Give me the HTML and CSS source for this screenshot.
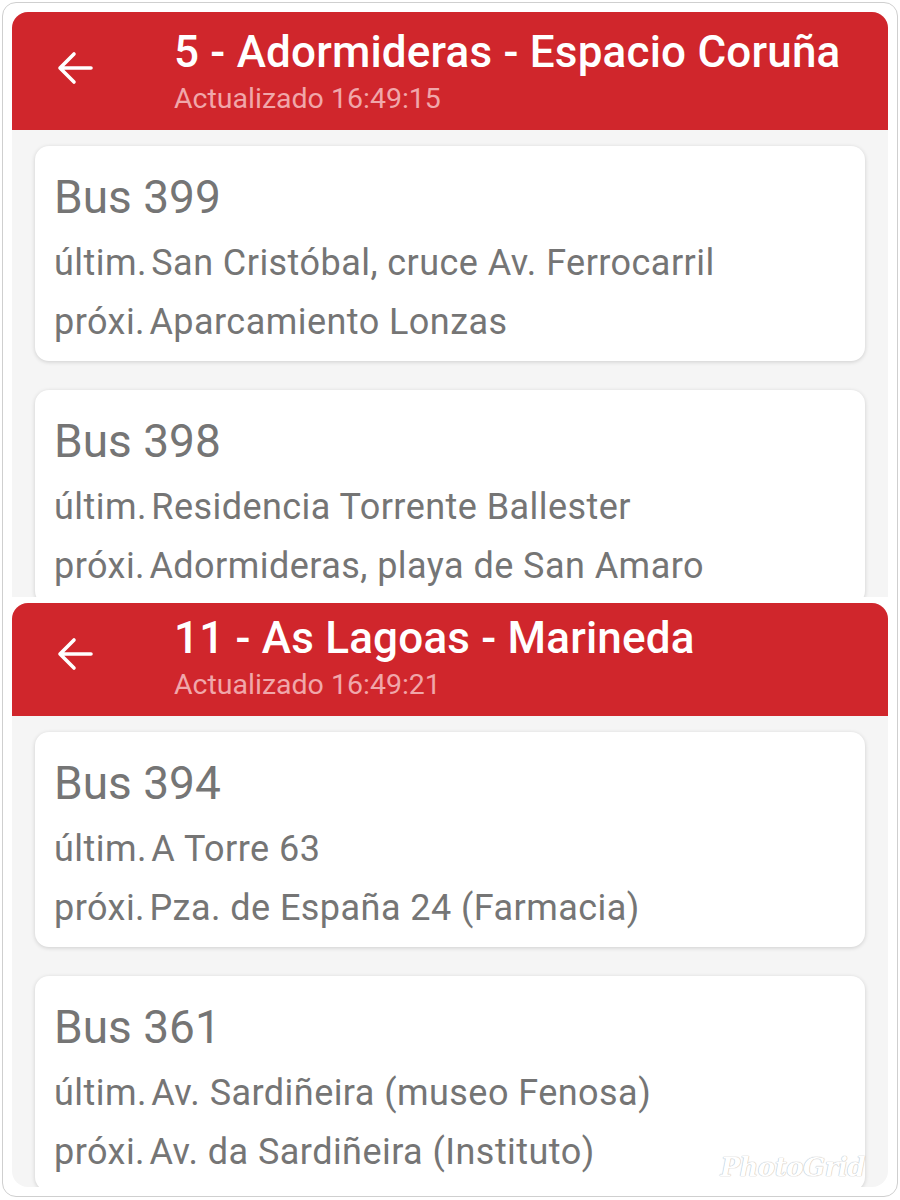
FILE: index.html
```html
<!DOCTYPE html>
<html lang="es">
<head>
<meta charset="utf-8">
<title>Buses</title>
<link rel="stylesheet" href="styles.css">
</head>
<body>
<div class="frame">
  <section class="panel panel--a">
    <header class="bar">
      <div class="back">
        <svg width="36" height="34" viewBox="0 0 36 34" aria-hidden="true"><path d="M34 17H3M17 3L3 17l14 14" fill="none" stroke="#fff" stroke-width="3.6" stroke-linecap="round" stroke-linejoin="round"/></svg>
      </div>
      <div class="titles">
        <h1 class="title">5 - Adormideras - Espacio Coruña</h1>
        <p class="sub">Actualizado 16:49:15</p>
      </div>
    </header>
    <div class="list">
      <article class="card">
        <h2 class="bus">Bus 399</h2>
        <p class="stop"><span class="lbl">últim.</span> San Cristóbal, cruce Av. Ferrocarril</p>
        <p class="stop"><span class="lbl">próxi.</span> Aparcamiento Lonzas</p>
      </article>
      <article class="card">
        <h2 class="bus">Bus 398</h2>
        <p class="stop"><span class="lbl">últim.</span> Residencia Torrente Ballester</p>
        <p class="stop"><span class="lbl">próxi.</span> Adormideras, playa de San Amaro</p>
      </article>
    </div>
  </section>
  <section class="panel panel--b">
    <header class="bar">
      <div class="back">
        <svg width="36" height="34" viewBox="0 0 36 34" aria-hidden="true"><path d="M34 17H3M17 3L3 17l14 14" fill="none" stroke="#fff" stroke-width="3.6" stroke-linecap="round" stroke-linejoin="round"/></svg>
      </div>
      <div class="titles">
        <h1 class="title">11 - As Lagoas - Marineda</h1>
        <p class="sub">Actualizado 16:49:21</p>
      </div>
    </header>
    <div class="list">
      <article class="card">
        <h2 class="bus">Bus 394</h2>
        <p class="stop"><span class="lbl">últim.</span> A Torre 63</p>
        <p class="stop"><span class="lbl">próxi.</span> Pza. de España 24 (Farmacia)</p>
      </article>
      <article class="card">
        <h2 class="bus">Bus 361</h2>
        <p class="stop"><span class="lbl">últim.</span> Av. Sardiñeira (museo Fenosa)</p>
        <p class="stop"><span class="lbl">próxi.</span> Av. da Sardiñeira (Instituto)</p>
      </article>
    </div>
  </section>
  <div class="mark">PhotoGrid</div>
</div>
</body>
</html>
```

FILE: styles.css
```css
* { box-sizing: border-box; }
html, body { margin: 0; padding: 0; background: #fff; }
body { font-family: Roboto, "Noto Sans", "Liberation Sans", sans-serif; }

.frame {
  position: relative;
  margin: 2px;
  height: 1195px;
  border: 1px solid #cfcfcf;
  border-radius: 14px;
  padding: 9px;
  display: flex;
  flex-direction: column;
  gap: 6px;
  overflow: hidden;
}

.panel {
  background: #f5f5f5;
  border-radius: 16px;
  overflow: hidden;
  flex: 0 0 auto;
}
.panel--a { height: 585px; border-radius: 16px 16px 0 0; }
.panel--b { flex: 1 1 auto; }

.bar {
  background: #d0262c;
  display: flex;
  height: 118px;
  padding-top: 16px;
}
.panel--b .bar { height: 113px; padding-top: 11px; }

.back {
  width: 162px;
  padding-left: 45px;
  padding-top: 23px;
  flex: 0 0 auto;
}
.back svg { display: block; }

.titles { min-width: 0; }
.title {
  margin: 0;
  color: #fff;
  font-weight: 500;
  font-size: 44px;
  letter-spacing: 0.2px;
  line-height: 48px;
  white-space: nowrap;
}
.sub {
  margin: 6px 0 0;
  color: #f0a7aa;
  font-size: 28.5px;
  line-height: 34px;
  white-space: nowrap;
}

.list {
  padding: 16px 23px 0;
  display: flex;
  flex-direction: column;
  gap: 29px;
}

.card {
  background: #fff;
  border-radius: 14px;
  box-shadow: 0 1px 4px rgba(0,0,0,0.16);
  padding: 23px 19px 9px;
  height: 215px;
  flex: 0 0 auto;
}
.bus {
  margin: 0 0 9px;
  font-weight: 400;
  font-size: 46px;
  line-height: 56px;
  color: #757575;
}
.stop {
  margin: 0;
  font-size: 36px;
  letter-spacing: 0.45px;
  line-height: 59px;
  color: #757575;
  white-space: nowrap;
}
.lbl { margin-right: -5px; }

.mark {
  position: absolute;
  right: 32px;
  bottom: 14px;
  font-family: "DejaVu Serif", serif;
  font-style: italic;
  font-weight: 700;
  font-size: 26px;
  color: #fff;
  text-shadow: 0 0 1px #b8b8b8, 0 0 1px #b8b8b8;
  letter-spacing: -0.5px;
}
```
